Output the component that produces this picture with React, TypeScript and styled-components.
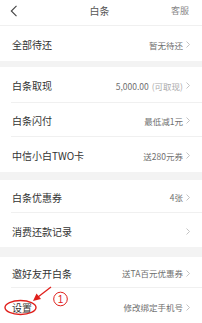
import React from "react";
import styled, { createGlobalStyle } from "styled-components";

const Global = createGlobalStyle`
  html, body { margin: 0; padding: 0; background: #f3f3f3; overflow: hidden; }
  body { font-family: "Noto Sans CJK SC", "Noto Sans", sans-serif; }
`;

const Page = styled.div`
  position: relative;
  width: 202px;
  height: 323px;
  overflow: hidden;
  background: #f3f3f3;
`;

const Header = styled.div`
  height: 26px;
  background: #fff;
  border-bottom: 1px solid #f0f0f0;
  box-sizing: border-box;
  display: grid;
  grid-template-columns: 40px 1fr 40px;
  align-items: center;
  padding: 0 13px 4px 10px;
`;

const Title = styled.div`
  text-align: center;
  font-size: 10px;
  color: #555;
`;

const Service = styled.div`
  text-align: right;
  font-size: 9px;
  color: #888;
`;

const Section = styled.div<{ $gap: number }>`
  background: #fff;
  margin-top: ${(p) => p.$gap}px;
`;

const Row = styled.div<{ $h: number; $last?: boolean }>`
  height: ${(p) => p.$h}px;
  margin-left: 11px;
  padding-right: 12px;
  display: flex;
  align-items: center;
  justify-content: space-between;
  border-bottom: ${(p) => (p.$last ? "none" : "1px solid #f0f0f0")};
  box-sizing: border-box;
`;

const Label = styled.span`
  font-size: 10px;
  color: #333;
  padding-left: 1px;
  padding-top: 2px;
`;

const Value = styled.span`
  display: flex;
  align-items: center;
  gap: 3px;
  font-size: 8.5px;
  color: #6f6f6f;
  padding-top: 2px;
`;

const Muted = styled.span`
  color: #aaa;
`;

const Chevron = () => (
  <svg width="4" height="7" viewBox="0 0 4 7">
    <path d="M0.5 0.5 L3.5 3.5 L0.5 6.5" fill="none" stroke="#b5b5b5" strokeWidth="0.8" />
  </svg>
);

const Overlay = styled.svg`
  position: absolute;
  left: 0;
  top: 0;
  pointer-events: none;
`;

type Item = { label: string; value?: React.ReactNode; h: number };

const sections: { gap: number; items: Item[] }[] = [
  { gap: 0, items: [{ label: "全部待还", value: "暂无待还", h: 35 }] },
  {
    gap: 6,
    items: [
      {
        label: "白条取现",
        value: (
          <>
            5,000.00 <Muted>(可取现)</Muted>
          </>
        ),
        h: 36,
      },
      { label: "白条闪付", value: "最低减1元", h: 34 },
      { label: "中信小白TWO卡", value: "送280元券", h: 35 },
    ],
  },
  {
    gap: 8,
    items: [
      { label: "白条优惠券", value: "4张", h: 33 },
      { label: "消费还款记录", value: "", h: 34 },
    ],
  },
  {
    gap: 10,
    items: [
      { label: "邀好友开白条", value: "送TA百元优惠券", h: 31 },
      { label: "设置", value: "修改绑定手机号", h: 36 },
    ],
  },
];

export default function App() {
  return (
    <Page>
      <Global />
      <Header>
        <svg width="8" height="12" viewBox="0 0 8 12">
          <path d="M6.5 0.8 L1.3 6 L6.5 11.2" fill="none" stroke="#444" strokeWidth="1.1" />
        </svg>
        <Title>白条</Title>
        <Service>客服</Service>
      </Header>
      {sections.map((s, i) => (
        <Section key={i} $gap={s.gap}>
          {s.items.map((it, j) => (
            <Row key={j} $h={it.h} $last={j === s.items.length - 1}>
              <Label>{it.label}</Label>
              <Value>
                {it.value}
                <Chevron />
              </Value>
            </Row>
          ))}
        </Section>
      ))}
      <Overlay width="202" height="323" viewBox="0 0 202 323">
        <ellipse cx="20.5" cy="307.5" rx="15.5" ry="7" fill="none" stroke="#e0201c" strokeWidth="1.4" />
        <line x1="51" y1="287" x2="38" y2="297" stroke="#e0201c" strokeWidth="1.3" />
        <polygon points="33,301 36.5,293.5 41,299" fill="#e0201c" />
        <circle cx="60.5" cy="299" r="6.8" fill="none" stroke="#e0201c" strokeWidth="1" />
        <text x="60.5" y="302.6" fontSize="10" textAnchor="middle" fill="#e0201c" fontFamily="Liberation Sans, sans-serif">1</text>
      </Overlay>
    </Page>
  );
}
